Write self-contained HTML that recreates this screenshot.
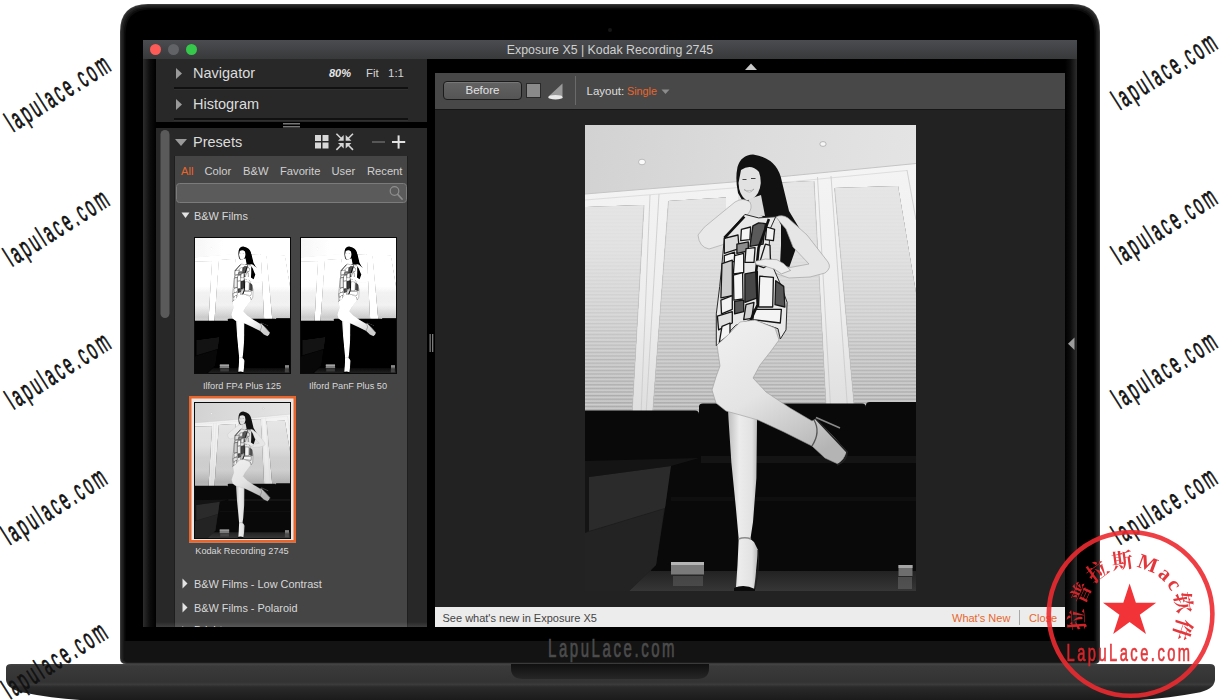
<!DOCTYPE html>
<html lang="en">
<head>
<meta charset="utf-8">
<title>Exposure X5 | Kodak Recording 2745</title>
<style>
html,body{margin:0;padding:0;}
body{width:1221px;height:700px;position:relative;overflow:hidden;background:#fff;font-family:"Liberation Sans","DejaVu Sans",sans-serif;}
.abs{position:absolute;}
#laptop{position:absolute;left:0;top:0;width:1221px;height:700px;}
#win{position:absolute;left:143px;top:40px;width:934px;height:587px;background:#000;overflow:hidden;}
#titlebar{position:absolute;left:0;top:0;width:934px;height:19px;background:linear-gradient(#4a4c4f,#37393b);}
#titlebar .t{position:absolute;left:0;width:934px;top:0;line-height:20.500px;text-align:center;color:#d0d0d0;font-size:12.350px;letter-spacing:0;}
.tl{position:absolute;top:4px;width:11px;height:11px;border-radius:50%;}
#lp1{position:absolute;left:13px;top:19px;width:271px;height:63px;background:#282828;}
#lp2{position:absolute;left:13px;top:88px;width:271px;height:499px;background:#282828;}
#sub{position:absolute;left:18px;top:28px;width:234px;height:471px;background:#454545;border-left:1px solid #1e1e1e;border-right:1px solid #1e1e1e;box-sizing:border-box;}
.hd{position:absolute;color:#dcdcdc;font-size:14.500px;line-height:18px;white-space:nowrap;}
.sm{position:absolute;color:#d4d4d4;font-size:11.5px;line-height:14px;white-space:nowrap;}
.tab{position:absolute;color:#d0d0d0;font-size:11.200px;line-height:14px;top:163.500px;white-space:nowrap;}
.lab{position:absolute;color:#d8d8d8;font-size:9.200px;line-height:12px;white-space:nowrap;text-align:center;width:110px;}
.grp{position:absolute;color:#d8d8d8;font-size:10.900px;line-height:14px;white-space:nowrap;left:194px;}
.sep{position:absolute;left:31px;width:234px;height:2px;background:#111;border-bottom:1px solid #333;}
#main{position:absolute;left:292px;top:33px;width:630px;height:554px;background:#222222;}
#toolbar{position:absolute;left:0;top:0;width:630px;height:36px;background:#484848;border-bottom:1px solid #161616;}
#bar{position:absolute;left:0;top:534px;width:630px;height:20px;background:#ececec;}
#rstrip{position:absolute;left:922px;top:19px;width:12px;height:568px;background:linear-gradient(to right,#000 0%,#0c0c0c 45%,#2c2c2c 100%);}
#lstrip{position:absolute;left:0;top:19px;width:13px;height:568px;background:linear-gradient(to left,#000 0%,#0c0c0c 45%,#2c2c2c 100%);}
.thumb{position:absolute;width:97px;height:137px;border:1px solid #0a0a0a;box-sizing:border-box;background:#888;overflow:hidden;}
</style>
</head>
<body>

<!-- PHOTO DEFS -->
<svg width="0" height="0" style="position:absolute">
  <defs>
    <linearGradient id="ceilg" x1="0" y1="0" x2="331" y2="30" gradientUnits="userSpaceOnUse">
      <stop offset="0" stop-color="#d2d2d2"/>
      <stop offset="0.5" stop-color="#dcdcdc"/>
      <stop offset="1" stop-color="#e4e4e4"/>
    </linearGradient>
    <linearGradient id="wallg" x1="0" y1="0" x2="0" y2="1">
      <stop offset="0" stop-color="#f4f4f4"/>
      <stop offset="0.6" stop-color="#ededed"/>
      <stop offset="1" stop-color="#dedede"/>
    </linearGradient>
    <linearGradient id="louvg" x1="0" y1="60" x2="0" y2="285" gradientUnits="userSpaceOnUse">
      <stop offset="0" stop-color="#e6e6e6"/>
      <stop offset="0.3" stop-color="#dedede"/>
      <stop offset="0.6" stop-color="#d2d2d2"/>
      <stop offset="0.85" stop-color="#c6c6c6"/>
      <stop offset="1" stop-color="#c0c0c0"/>
    </linearGradient>
    <linearGradient id="slatfade" x1="0" y1="60" x2="0" y2="285" gradientUnits="userSpaceOnUse">
      <stop offset="0" stop-color="#e6e6e6" stop-opacity="0.96"/>
      <stop offset="0.3" stop-color="#e2e2e2" stop-opacity="0.88"/>
      <stop offset="0.6" stop-color="#d6d6d6" stop-opacity="0.6"/>
      <stop offset="0.85" stop-color="#c4c4c4" stop-opacity="0.2"/>
      <stop offset="1" stop-color="#c0c0c0" stop-opacity="0"/>
    </linearGradient>
    <pattern id="slats" width="6" height="3.600" patternUnits="userSpaceOnUse">
      <rect width="6" height="1.200" y="0" fill="#000" opacity="0.130"/>
      <rect width="6" height="1.200" y="1.800" fill="#fff" opacity="0.200"/>
    </pattern>
    <linearGradient id="floorg" x1="0" y1="0" x2="0" y2="1">
      <stop offset="0" stop-color="#1a1a1a"/>
      <stop offset="1" stop-color="#363636"/>
    </linearGradient>
    <linearGradient id="legg" x1="0" y1="0" x2="1" y2="0">
      <stop offset="0" stop-color="#bdbdbd"/>
      <stop offset="0.35" stop-color="#ececec"/>
      <stop offset="0.75" stop-color="#e2e2e2"/>
      <stop offset="1" stop-color="#a8a8a8"/>
    </linearGradient>
    <linearGradient id="calfg" x1="130" y1="200" x2="215" y2="340" gradientUnits="userSpaceOnUse">
      <stop offset="0" stop-color="#f0f0f0"/>
      <stop offset="0.5" stop-color="#e4e4e4"/>
      <stop offset="0.8" stop-color="#c8c8c8"/>
      <stop offset="1" stop-color="#b4b4b4"/>
    </linearGradient>
    <symbol id="photo" viewBox="0 0 331 466" preserveAspectRatio="none">
      <!-- ceiling -->
      <rect x="0" y="0" width="331" height="466" fill="url(#ceilg)"/>
      <ellipse cx="57" cy="37" rx="3.500" ry="2.800" fill="#fafafa" stroke="#b0b0b0" stroke-width="0.800"/>
      <ellipse cx="238" cy="19" rx="3.200" ry="2.400" fill="#f6f6f6" stroke="#a8a8a8" stroke-width="0.800"/>
      <!-- wall / wardrobe frame -->
      <path d="M0 69 L148 57 L193 52 L331 38.500 V290 H0 Z" fill="url(#wallg)"/>
      <path d="M0 69 L148 57 L193 52 L331 38.500" fill="none" stroke="#c4c4c4" stroke-width="1"/>
      <path d="M0 75 L148 63 L193 58 L322 45.500" fill="none" stroke="#d8d8d8" stroke-width="0.800"/>
      <!-- louver panels -->
      <g>
        <path id="pn1" d="M2 82 L59 80 L47 290 H0 V82 Z"/>
        <path id="pn2" d="M83.500 76 L141 72.500 L141 290 H67.500 Z"/>
        <path id="pn3" d="M153 60 L229 56 L241.500 290 H153 Z"/>
        <path id="pn4" d="M249.600 63 L313 61 L331 168 V290 H270 Z"/>
      </g>
      <use href="#pn1" fill="url(#louvg)"/><use href="#pn1" fill="url(#slats)"/><use href="#pn1" fill="url(#slatfade)"/>
      <use href="#pn2" fill="url(#louvg)"/><use href="#pn2" fill="url(#slats)"/><use href="#pn2" fill="url(#slatfade)"/>
      <use href="#pn3" fill="url(#louvg)"/><use href="#pn3" fill="url(#slats)"/><use href="#pn3" fill="url(#slatfade)"/>
      <use href="#pn4" fill="url(#louvg)"/><use href="#pn4" fill="url(#slats)"/><use href="#pn4" fill="url(#slatfade)"/>
      <g fill="none" stroke="#c9c9c9" stroke-width="0.800">
        <path d="M59 80 L47 290"/><path d="M83.500 76 L67.500 290"/><path d="M229 56 L241.500 290"/><path d="M249.600 63 L270 290"/>
        <path d="M65 70 L56 290"/><path d="M74 69 L61 290"/>
        <path d="M232.500 52 L246 290"/><path d="M246 51 L263 290"/>
        <path d="M322 45 L331 95"/>
      </g>
      <!-- floor -->
      <rect x="0" y="438" width="331" height="28" fill="url(#floorg)"/>
      <!-- sofa -->
      <path d="M0 285.500 H110 Q114 285.500 114 289 V281.500 Q114 278.500 118 278.500 H277 Q281 278.500 281 282 V280 Q281 277 285 277 H331 V446 H66 L74 384 L0 408 Z" fill="#090909"/>
      <!-- sofa seat sheen -->
      <path d="M116 331 H331 V338 H116 Z" fill="#141414"/>
      <path d="M86 372 H331 V376 H86 Z" fill="#0f0f0f"/>
      <!-- chaise -->
      <path d="M0 336 H86 L80 383 L71 440 L44 466 H0 Z" fill="#1d1d1d"/>
      <path d="M4 352 L86 341 L80 383 L4 406 Z" fill="#2b2b2b"/>
      <path d="M0 408 L79 384 L71 440 L44 466 H0 Z" fill="#232323"/>
      <path d="M0 336 L114 333 L86 341 L4 352 L4 406 L0 408 Z" fill="#141414"/>
      <!-- sofa legs -->
      <rect x="86" y="437" width="33" height="12.500" fill="#7a7a7a"/>
      <rect x="86" y="437" width="33" height="3" fill="#b5b5b5"/>
      <rect x="313.500" y="440" width="14" height="11" fill="#6e6e6e"/>
      <rect x="313.500" y="440" width="14" height="3" fill="#a5a5a5"/>
      <rect x="88" y="451" width="30" height="10" fill="#5a5a5a" opacity="0.600"/>
      <rect x="313" y="452" width="14" height="12" fill="#666" opacity="0.600"/>
      <!-- hair -->
      <path d="M168 29.500 Q156 30 152.500 42 Q150 54 153 68 L160 80 L178 92 L192 92 L196 100 L196 120 L195 140 L204 143 L210 126 L216 106 L204 86 L197 57 Q193 33 168 29.500 Z" fill="#111"/>
      <!-- face -->
      <path d="M156 45 Q166 38 174 47 Q178 58 173 68 Q168 76 161 75 Q154 70 153.500 58 Z" fill="#e2e2e2"/>
      <path d="M159 64.500 Q164 67.500 169 64 Q165 70 159 64.500 Z" fill="#fff" stroke="#888" stroke-width="0.500"/>
      <path d="M157.500 54.500 h4 M166 53.500 h4.500" stroke="#444" stroke-width="1"/>
      <!-- neck -->
      <path d="M164 74 L176 70 L180 91 L160 90 Z" fill="#dcdcdc"/>
      <!-- left (raised) arm -->
      <path d="M113 110 Q118 102 128 95 L150 77 Q158 72 165 77 Q168 83 163 89 L158 93 L147 104 L140 119 L124 124 Q114 122 113 110 Z" fill="#e9e9e9" stroke="#a9a9a9" stroke-width="0.700"/>
      <!-- right arm -->
      <path d="M191 92 Q197 89 203 93 L222 110 L243 137 Q247 143 240 148 L225 152 L204 153 L190 148 L176 142 L177 137 L190 139 L205 142.500 L224 139 L208 122 L201 104 L195 97 Z" fill="#e6e6e6" stroke="#a4a4a4" stroke-width="0.700"/>
      <!-- dress -->
      <path d="M159.9 89.4 L173.6 92.9 L190.7 91.7 L185.0 104.3 L183.9 127.1 L188.4 143.1 L196.4 161.4 L202.1 177.4 L201.0 204.9 L195.3 214.0 L193.0 203.7 L166.7 194.6 L150.7 200.3 L131.3 220.9 L131.3 188.9 L134.7 161.4 L137.0 138.6 L139.3 113.4 L150.7 99.7 Z" fill="#e9e9e9" stroke="#2a2a2a" stroke-width="1"/>
      <g stroke="#151515" stroke-width="1.300" stroke-linejoin="round">
        <path d="M139.3 113.4 L153.0 110.0 L154.1 123.7 L139.3 128.3 Z" fill="#dcdcdc"/>
        <path d="M156.4 104.3 L165.6 102.0 L164.9 114.6 L155.7 115.7 Z" fill="#f6f6f6"/>
        <path d="M167.9 100.9 L173.6 97.9 L180.4 98.6 L178.1 119.1 L164.9 121.4 Z" fill="#5a5a5a"/>
        <path d="M181.6 102.0 L189.6 104.3 L188.4 115.7 L180.4 114.6 Z" fill="#f2f2f2"/>
        <path d="M151.9 119.1 L163.3 116.9 L163.3 126.0 L151.9 128.3 Z" fill="#8c8c8c"/>
        <path d="M139.3 130.6 L149.6 127.1 L149.6 136.3 L139.3 138.6 Z" fill="#f4f4f4"/>
        <path d="M149.6 130.6 L158.7 128.3 L158.7 147.7 L148.4 148.9 Z" fill="#f6f6f6"/>
        <path d="M161.0 123.7 L170.1 122.6 L169.0 137.4 L159.9 137.4 Z" fill="#ededed"/>
        <path d="M137.0 138.6 L147.3 135.1 L147.3 170.6 L135.9 172.9 Z" fill="#cdcdcd"/>
        <path d="M148.4 150.0 L157.6 147.7 L158.0 174.0 L148.9 175.1 Z" fill="#f6f6f6"/>
        <path d="M159.9 148.9 L172.4 146.6 L172.4 172.9 L159.9 177.4 Z" fill="#474747"/>
        <path d="M174.7 151.1 L188.4 152.3 L187.7 182.0 L173.6 182.0 Z" fill="#f4f4f4"/>
        <path d="M190.7 155.7 L198.7 161.4 L199.9 182.0 L190.0 179.7 Z" fill="#555555"/>
        <path d="M135.9 175.1 L147.3 170.6 L147.3 184.3 L136.5 188.9 Z" fill="#f2f2f2"/>
        <path d="M149.6 176.3 L158.7 175.1 L158.7 186.6 L149.6 188.9 Z" fill="#585858"/>
        <path d="M169.0 184.3 L196.4 184.3 L195.3 198.0 L167.9 194.6 Z" fill="#f4f4f4"/>
        <path d="M132.4 191.1 L147.3 186.6 L147.3 198.0 L133.6 204.9 Z" fill="#e2e2e2"/>
        <path d="M137.0 201.4 L145.0 198.0 L145.0 209.4 L134.3 217.4 Z" fill="#f4f4f4"/>
        <path d="M161.0 179.7 L169.0 177.4 L166.7 193.4 L158.7 194.6 Z" fill="#d2d2d2"/>
        <path d="M180.4 119.1 L185.0 120.3 L185.5 138.6 L178.6 142.7 L173.6 140.9 Z" fill="#e8e8e8"/>
      </g>
      <g fill="none" stroke="#111" stroke-width="2.600" stroke-linejoin="round">
        <path d="M183.9 94.0 L178.6 108.9 L173.6 122.6 L171.3 145.4 L172.7 179.7 L165.6 195.3"/>
        <path d="M159.4 91.7 L150.7 100.9 L139.3 113.0"/>
      </g>
      <path d="M170.1 136.3 L180.4 134.0 L191.9 134.7 L198.7 138.6 L205.6 145.4 L196.4 148.9 L189.6 144.3 L180.4 141.3 L171.3 139.7 Z" fill="#ececec" stroke="#8a8a8a" stroke-width="0.600"/>
      <!-- standing leg -->
      <path d="M143 284 L143.500 294 L146.400 338 L150.800 382 L153.700 414 L152.500 440 L151 462 L169 464 L170.500 452 L173 425 L169 417 L165.400 414 L168 397 L171.400 353 L172 296 L175 270 Z" fill="url(#legg)"/>
      <!-- raised leg -->
      <path d="M132 220 L145 208 L155 197 L170 195 L190 203 L194 215 L186 226 L175 240 L168 253 L181 267 L205 283 L227 296 L231 294 L247 310 L262 327 L258 334 L253 339 L240 333 L227 321 L199 307 L173 295 L141 286 L131 278 L127 265 L131 252 L135 241 Z" fill="url(#calfg)" stroke="#9a9a9a" stroke-width="0.600"/>
      <!-- raised shoe -->
      <path d="M229 295 Q236 307 227 321" fill="none" stroke="#555" stroke-width="1.300"/>
      <path d="M231 294 L262 327 Q262 336 252 340" fill="none" stroke="#222" stroke-width="1.800"/>
      <path d="M231 292.500 L255 303" fill="none" stroke="#8a8a8a" stroke-width="1.600"/>
      <!-- standing foot strap / shoe -->
      <path d="M153.500 414 Q160 411.500 166 414" fill="none" stroke="#8a8a8a" stroke-width="1.500"/>
      <path d="M173 425 Q175 440 170 464" fill="none" stroke="#222" stroke-width="1.200"/>
      <path d="M149 463 Q159 458.500 170 464 L170 466 H149 Z" fill="#0a0a0a"/>
    </symbol>
  </defs>
</svg>
<!-- /PHOTO DEFS -->

<!-- LAPTOP BODY -->
<svg id="laptop" viewBox="0 0 1221 700">
  <defs>
    <linearGradient id="baseg" x1="0" y1="0" x2="0" y2="1">
      <stop offset="0" stop-color="#454545"/>
      <stop offset="0.06" stop-color="#3a3a3a"/>
      <stop offset="0.5" stop-color="#333333"/>
      <stop offset="0.57" stop-color="#3b3b3b"/>
      <stop offset="0.64" stop-color="#2a2a2a"/>
      <stop offset="1" stop-color="#1b1b1b"/>
    </linearGradient>
    <linearGradient id="notchg" x1="0" y1="0" x2="0" y2="1">
      <stop offset="0" stop-color="#101010"/>
      <stop offset="1" stop-color="#262626"/>
    </linearGradient>
  </defs>
  <!-- lid -->
  <path d="M120 658 V32.0 Q120 4 148.0 4 H1072.0 Q1100 4 1100 32.0 V658 Q1100 664 1094 664 H126 Q120 664 120 658 Z" fill="#3a3a3a"/>
  <path d="M121 658 V32.4 Q121 5 148.4 5 H1071.6 Q1099 5 1099 32.4 V658 Q1099 663 1094 663 H126 Q121 663 121 658 Z" fill="#262626"/>
  <path d="M122.5 658.0 V33.0 Q122.5 6.5 149.0 6.5 H1071.0 Q1097.5 6.5 1097.5 33.0 V658.0 Q1097.5 661.5 1094.0 661.5 H126.0 Q122.5 661.5 122.5 658.0 Z" fill="#181818"/>
  <path d="M124 658 V33.6 Q124 8 149.6 8 H1070.4 Q1096 8 1096 33.6 V658 Q1096 660 1094 660 H126 Q124 660 124 658 Z" fill="#0c0c0c"/>
  <path d="M125.5 657.0 V34.2 Q125.5 9.5 150.2 9.5 H1069.8 Q1094.5 9.5 1094.5 34.2 V657.0 Q1094.5 658.5 1093.0 658.5 H127.0 Q125.5 658.5 125.5 657.0 Z" fill="#000"/>
  <!-- chin -->
  <path d="M124 641 H1096 V658 Q1096 662.500 1092 662.500 H128 Q124 662.500 124 658 Z" fill="#131313"/>
  <!-- base -->
  <path d="M6 668 Q6 664 11 664 H1210 Q1215 664 1215 668 V680 Q1214 690 1196 693 Q1170 698 1140 700 H80 Q50 698 26 693 Q7 690 6 680 Z" fill="url(#baseg)"/>
  <!-- notch -->
  <path d="M511 664 H709 V668 Q709 679 697 679 H523 Q511 679 511 668 Z" fill="url(#notchg)"/>
  <circle cx="610" cy="30" r="2" fill="#161616"/>
</svg>

<!-- APP WINDOW -->
<div id="win">
  <div id="titlebar">
    <div class="tl" style="left:7px;background:#fc5b57;"></div>
    <div class="tl" style="left:25px;background:#616366;"></div>
    <div class="tl" style="left:43px;background:#35c84a;"></div>
    <div class="t">Exposure X5 | Kodak Recording 2745</div>
  </div>

  <div id="lp1"></div>
  <div id="lp2"><div id="sub"></div></div>
  <!-- left panel contents (coords relative to window: x-143, y-40) -->
  <div id="lpc" style="position:absolute;left:-143px;top:-40px;width:1221px;height:700px;">
    <svg class="abs" style="left:0;top:0;width:1221px;height:700px;" viewBox="0 0 1221 700">
      <!-- header triangles -->
      <path d="M176 68 L182 73.500 L176 79 Z" fill="#9a9a9a"/>
      <path d="M176 99 L182 104.500 L176 110 Z" fill="#9a9a9a"/>
      <path d="M175 139 H187 L181 146 Z" fill="#9a9a9a"/>
      <!-- separators -->
      <rect x="174" y="87" width="234" height="2" fill="#101010"/>
      <rect x="174" y="89" width="234" height="1" fill="#303030"/>
      <rect x="174" y="118" width="234" height="2" fill="#101010"/>
      <rect x="174" y="120" width="234" height="1" fill="#303030"/>
      <!-- grip -->
      <rect x="283" y="123" width="17" height="1.500" fill="#777"/>
      <rect x="283" y="126" width="17" height="1.500" fill="#777"/>
      <!-- scrollbar -->
      <rect x="160.500" y="130" width="9" height="188" rx="4.500" fill="#5a5a5a"/>
      <!-- grid icon -->
      <g fill="#d8d8d8">
        <rect x="315" y="135" width="6" height="6"/><rect x="322.500" y="135" width="6" height="6"/>
        <rect x="315" y="142.500" width="6" height="6"/><rect x="322.500" y="142.500" width="6" height="6"/>
      </g>
      <!-- collapse icon -->
      <g stroke="#d6d6d6" stroke-width="1.600" fill="none" stroke-linecap="butt">
        <path d="M336.400 133.700 L342 139.300"/>
        <path d="M353 133.700 L347.400 139.300"/>
        <path d="M336.400 149.900 L342 144.300"/>
        <path d="M353 149.900 L347.400 144.300"/>
      </g>
      <g fill="#d6d6d6">
        <path d="M338 140.700 H343.700 V135 Z"/>
        <path d="M351.400 140.700 H345.700 V135 Z"/>
        <path d="M338 142.900 H343.700 V148.600 Z"/>
        <path d="M351.400 142.900 H345.700 V148.600 Z"/>
      </g>
      <!-- minus / plus -->
      <rect x="372" y="141.100" width="13" height="1.800" fill="#5c5c5c"/>
      <rect x="392" y="141" width="13.200" height="2" fill="#e2e2e2"/>
      <rect x="397.600" y="135.400" width="2" height="13.200" fill="#e2e2e2"/>
      <!-- search box -->
      <rect x="176.500" y="183.500" width="230" height="19" rx="3" fill="#5b5b5b" stroke="#7b7b7b" stroke-width="1"/>
      <circle cx="394.500" cy="191" r="4.300" fill="none" stroke="#8e8e8e" stroke-width="1.200"/>
      <path d="M397.800 194.500 L402 199" stroke="#8e8e8e" stroke-width="1.800" stroke-linecap="round"/>
      <!-- group triangles -->
      <path d="M181.500 212.500 H189.500 L185.500 218 Z" fill="#e4e4e4"/>
      <path d="M182.500 578.500 L187.500 583.500 L182.500 588.500 Z" fill="#e4e4e4"/>
      <path d="M182.500 602.500 L187.500 607.500 L182.500 612.500 Z" fill="#e4e4e4"/>
      <path d="M182.500 626 L187.500 631 L182.500 636 Z" fill="#e4e4e4"/>
      <!-- left collapse arrow -->
      <path d="M151.500 337.500 V350 L145 343.700 Z" fill="#9c9c9c"/>
      <!-- splitter grip -->
      <rect x="429.500" y="334" width="1.300" height="18" fill="#7a7a7a"/>
      <rect x="432" y="334" width="1.300" height="18" fill="#7a7a7a"/>
      <!-- selected frame -->
      <rect x="189" y="396" width="107" height="146.500" fill="#e8e8e8"/>
      <rect x="190.250" y="397.250" width="104.500" height="144" fill="none" stroke="#e8662c" stroke-width="2.500"/>
    </svg>
    <div class="hd" style="left:193px;top:64px;">Navigator</div>
    <div class="hd" style="left:193px;top:95px;">Histogram</div>
    <div class="hd" style="left:193px;top:133px;">Presets</div>
    <div class="sm" style="left:329px;top:66px;font-style:italic;font-weight:bold;font-size:11px;color:#e6e6e6;">80%</div>
    <div class="sm" style="left:366px;top:66px;">Fit</div>
    <div class="sm" style="left:388px;top:66px;">1:1</div>
    <div class="tab" style="left:181px;color:#e8662c;">All</div>
    <div class="tab" style="left:204.500px;">Color</div>
    <div class="tab" style="left:243px;">B&amp;W</div>
    <div class="tab" style="left:280px;">Favorite</div>
    <div class="tab" style="left:331.500px;">User</div>
    <div class="tab" style="left:367px;">Recent</div>
    <div class="grp" style="top:208.500px;">B&amp;W Films</div>
    <div class="thumb" style="left:193.500px;top:236.500px;"><svg width="95" height="135" viewBox="0 0 331 466" preserveAspectRatio="none" style="display:block;filter:contrast(1.3) brightness(1.05);"><use href="#photo" width="331" height="466"/></svg></div>
    <div class="thumb" style="left:300px;top:236.500px;"><svg width="95" height="135" viewBox="0 0 331 466" preserveAspectRatio="none" style="display:block;filter:contrast(1.3) brightness(1.05);"><use href="#photo" width="331" height="466"/></svg></div>
    <div class="thumb" style="left:194px;top:401.500px;"><svg width="95" height="135" viewBox="0 0 331 466" preserveAspectRatio="none" style="display:block;"><use href="#photo" width="331" height="466"/></svg></div>
    <div class="lab" style="left:187px;top:380px;">Ilford FP4 Plus 125</div>
    <div class="lab" style="left:293px;top:380px;">Ilford PanF Plus 50</div>
    <div class="lab" style="left:187px;top:545px;">Kodak Recording 2745</div>
    <div class="grp" style="top:576.500px;">B&amp;W Films - Low Contrast</div>
    <div class="grp" style="top:600.500px;">B&amp;W Films - Polaroid</div>
    <div class="grp" style="top:623px;">Bright</div>
  </div>
  <div id="main">
    <div id="toolbar">
      <div class="abs" style="left:8px;top:7.500px;width:79px;height:19.500px;box-sizing:border-box;border:1px solid #1b1b1b;border-radius:4px;background:linear-gradient(#626262,#555555);box-shadow:inset 0 1px 0 #777;color:#e2e2e2;font-size:11.500px;line-height:17px;text-align:center;">Before</div>
      <div class="abs" style="left:91px;top:10px;width:15px;height:15px;box-sizing:border-box;border:1px solid #2a2a2a;background:#8a8a8a;"></div>
      <svg class="abs" style="left:110px;top:8px;width:22px;height:22px;" viewBox="0 0 22 22">
        <path d="M17.500 2.500 L17.500 15 L4 15 Z" fill="#9a9a9a"/>
        <ellipse cx="10.500" cy="16.200" rx="7.300" ry="2.300" fill="#e9e9e9"/>
      </svg>
      <div class="abs" style="left:140px;top:3px;width:1px;height:29px;background:#6a6a6a;"></div>
      <div class="abs" style="left:151.500px;top:11px;font-size:11.500px;line-height:14px;color:#dedede;white-space:nowrap;">Layout:</div>
      <div class="abs" style="left:192px;top:11px;font-size:10.800px;line-height:14px;color:#e8662c;white-space:nowrap;">Single</div>
      <svg class="abs" style="left:224.500px;top:14.500px;width:12px;height:8px;" viewBox="0 0 12 8"><path d="M1.500 1.500 H9.500 L5.500 6 Z" fill="#8c8c8c"/></svg>
    </div>
    <svg class="abs" style="left:309px;top:-11.500px;width:14px;height:9px;" viewBox="0 0 14 9"><path d="M1 8 L7 1.500 L13 8 Z" fill="#c9c9c9"/></svg>
    <svg class="abs" style="left:150px;top:52px;width:331px;height:466px;" viewBox="0 0 331 466"><use href="#photo" width="331" height="466"/></svg>
    <div id="bar">
      <div class="abs" style="left:7.500px;top:3.500px;font-size:11px;line-height:14px;color:#444;white-space:nowrap;">See what's new in Exposure X5</div>
      <div class="abs" style="left:517px;top:3.500px;font-size:11px;line-height:14px;color:#e8662c;white-space:nowrap;">What's New</div>
      <div class="abs" style="left:584px;top:2.500px;width:1px;height:15px;background:#a8a8a8;"></div>
      <div class="abs" style="left:594px;top:3.500px;font-size:11px;line-height:14px;color:#e8662c;white-space:nowrap;">Close</div>
    </div>
  </div>
  <div id="lstrip"></div>
  <div class="abs" style="left:13px;top:582px;width:271px;height:5px;background:linear-gradient(rgba(255,255,255,0),rgba(255,255,255,0.100));"></div>
  <div id="rstrip"><svg class="abs" style="left:0;top:277px;width:12px;height:16px;" viewBox="0 0 12 16"><path d="M9.500 1.500 V14 L3 7.700 Z" fill="#9c9c9c"/></svg></div>
</div>

<!-- CHIN TEXT -->
<svg class="abs" style="left:0;top:0;width:1221px;height:700px;pointer-events:none;" viewBox="0 0 1221 700">
  <text transform="translate(548,657) scale(0.600,1)" font-family="'Liberation Sans','DejaVu Sans',sans-serif" font-size="25" fill="#4c4c4c" stroke="#4c4c4c" stroke-width="0.700" textLength="211" lengthAdjust="spacing">LapuLace.com</text>
</svg>

<!-- WATERMARKS -->
<svg id="wm" class="abs" style="left:0;top:0;width:1221px;height:700px;pointer-events:none;" viewBox="0 0 1221 700">
  <g font-family="'Liberation Sans','DejaVu Sans',sans-serif" font-size="29" fill="#111" stroke="#111" stroke-width="0.800" stroke-linejoin="round">
    <text transform="translate(13.200,132.600) rotate(-32.300) scale(0.500,1)" textLength="234" lengthAdjust="spacing">lapulace.com</text>
    <text transform="translate(12.100,267.100) rotate(-32.300) scale(0.500,1)" textLength="234" lengthAdjust="spacing">lapulace.com</text>
    <text transform="translate(13.500,410.100) rotate(-32.300) scale(0.500,1)" textLength="234" lengthAdjust="spacing">lapulace.com</text>
    <text transform="translate(9.700,545.500) rotate(-32.300) scale(0.500,1)" textLength="234" lengthAdjust="spacing">lapulace.com</text>
    <text transform="translate(10.200,699.700) rotate(-32.300) scale(0.500,1)" textLength="234" lengthAdjust="spacing">lapulace.com</text>
    <text transform="translate(1120.100,110.500) rotate(-32.300) scale(0.500,1)" textLength="234" lengthAdjust="spacing">lapulace.com</text>
    <text transform="translate(1120.100,265.300) rotate(-32.300) scale(0.500,1)" textLength="234" lengthAdjust="spacing">lapulace.com</text>
    <text transform="translate(1120.100,409.300) rotate(-32.300) scale(0.500,1)" textLength="234" lengthAdjust="spacing">lapulace.com</text>
    <text transform="translate(1120.100,545.300) rotate(-32.300) scale(0.500,1)" textLength="234" lengthAdjust="spacing">lapulace.com</text>
  </g>
</svg>

<!-- STAMP -->
<svg id="stamp" class="abs" style="left:0;top:0;width:1221px;height:700px;pointer-events:none;" viewBox="0 0 1221 700">
  <defs><path id="arc" d="M1086.633 629.139 A46.500 46.500 0 1 1 1171.657 635.830"/></defs>
  <circle cx="1130.600" cy="614" r="81.800" fill="none" stroke="#ec2a30" stroke-width="4.600" opacity="0.900"/>
  <path d="M1129.600 583.500 L1135.900 602.800 L1156.200 602.800 L1139.800 614.700 L1146 634 L1129.600 622.100 L1113.200 634 L1119.400 614.700 L1103 602.800 L1123.300 602.800 Z" fill="#f23338"/>
  <text font-family="'Liberation Serif','Noto Serif CJK SC',serif" font-size="21" font-weight="700" fill="#e2272c" opacity="0.920" letter-spacing="2.400"><textPath href="#arc" startOffset="0">拉普拉斯Mac软件</textPath></text>
  <text transform="translate(1066.500,660.500) scale(0.600,1)" font-family="'Liberation Sans','DejaVu Sans',sans-serif" font-size="24.500" fill="#e2272c" stroke="#e2272c" stroke-width="0.700" opacity="0.920" textLength="206" lengthAdjust="spacing">LapuLace.com</text>
</svg>

</body>
</html>
